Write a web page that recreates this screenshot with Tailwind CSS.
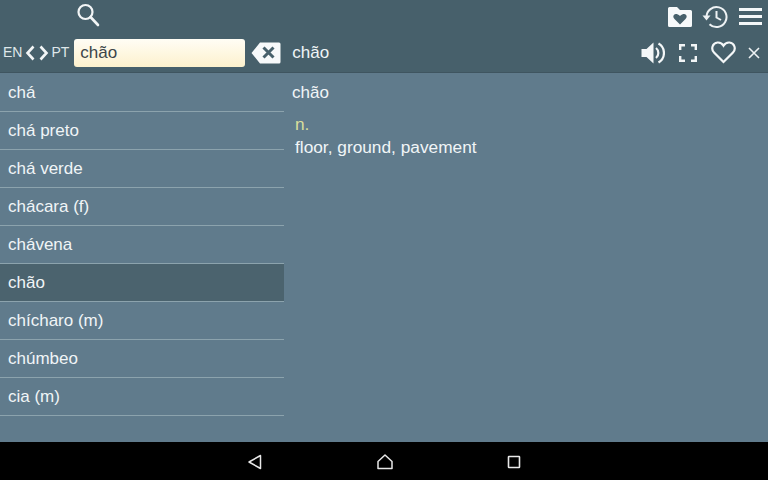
<!DOCTYPE html>
<html lang="pt">
<head>
    <meta charset="UTF-8">
    <meta name="viewport" content="width=device-width, initial-scale=1.0">
    <title>Dictionary</title>
    <script src="https://cdn.jsdelivr.net/npm/@tailwindcss/browser@4"></script>
</head>
<body class="w-[768px] h-[480px] overflow-hidden flex flex-col bg-[#607b8c] font-['Liberation_Sans',Arial,sans-serif] text-[#f0f5f7]">
    <!-- top bar -->
    <header class="h-[73px] shrink-0 bg-[#47606b] border-b border-[#3f5560] flex flex-col">
        <div class="h-[33px] flex items-center">
            <svg class="ml-[76px] mb-[3px]" width="24" height="24" viewBox="0 0 24 24" fill="none" stroke="#f2f5f6" stroke-width="2.2" stroke-linecap="round">
                <circle cx="9.5" cy="9" r="7"/>
                <path d="M14.500 14l7.500 8" stroke-width="2.600"/>
            </svg>
            <div class="ml-auto flex items-center">
                <svg width="26" height="22" viewBox="0 0 26 22">
                    <path fill="#f7f9fa" fill-rule="evenodd" d="M2.500 1H10l3 3h10.500a1.500 1.500 0 0 1 1.500 1.500V19.500a1.500 1.500 0 0 1-1.500 1.500H2.500A1.500 1.500 0 0 1 1 19.500V2.500A1.500 1.500 0 0 1 2.500 1zM13 18.500l5.500-5.500c1.600-1.700 1.300-3.300.6-4.100-1.100-1.200-3.300-1.400-6.100 1-2.800-2.400-5-2.200-6.100-1-.7.800-1 2.400.6 4.100z"/>
                </svg>
                <svg class="ml-[9px]" width="26" height="24" viewBox="0 0 26 24" fill="none" stroke="#eef2f4" stroke-width="2">
                    <path d="M4.500 12a10 10 0 1 1 3 7.200"/>
                    <path d="M0.500 10.500h8l-4 5z" fill="#eef2f4" stroke="none"/>
                    <path d="M14.500 6v6.500l4.500 2.500"/>
                </svg>
                <div class="ml-[11px] mr-[6px] w-[23px] flex flex-col gap-[4px]">
                    <div class="h-[3px] bg-[#f4f7f8]"></div>
                    <div class="h-[3px] bg-[#f4f7f8]"></div>
                    <div class="h-[3px] bg-[#f4f7f8]"></div>
                </div>
            </div>
        </div>
        <div class="flex-1 flex items-center">
            <span class="ml-[3px] text-[14px] text-[#dfe7ea]">EN</span>
            <svg class="ml-[3px]" width="10" height="16" viewBox="0 0 10 16" fill="none" stroke="#f2f5f6" stroke-width="2.600"><path d="M8.500 1.500L2.500 8l6 6.500"/></svg>
            <svg class="ml-[4px]" width="10" height="16" viewBox="0 0 10 16" fill="none" stroke="#f2f5f6" stroke-width="2.600"><path d="M1.500 1.500L7.500 8l-6 6.500"/></svg>
            <span class="ml-[2px] text-[14px] text-[#dfe7ea]">PT</span>
            <div class="ml-[5px] w-[171px] h-[28px] rounded-[3px] bg-gradient-to-b from-[#fffdf5] to-[#fdf1cd] flex items-center pl-[6px] text-[17px] text-[#3c4549]">chão</div>
            <svg class="ml-[6px]" width="30" height="22" viewBox="0 0 30 22">
                <path fill="#f7f9fa" d="M9 0.500h19a1.500 1.500 0 0 1 1.500 1.500v18a1.500 1.500 0 0 1-1.500 1.500H9L0.500 11z"/>
                <path d="M12.500 5.500l10 10m0-10l-10 10" stroke="#47606b" stroke-width="3"/>
            </svg>
            <span class="ml-[11px] text-[17px]">chão</span>
            <div class="ml-auto flex items-center">
                <svg width="24" height="24" viewBox="0 0 24 24">
                    <path fill="#f4f7f8" d="M0.500 8h5L12.500 1.500v21L5.500 16h-5z"/>
                    <path d="M15 7a6.500 6.500 0 0 1 0 10M17.500 2.500a11 11 0 0 1 0 19" fill="none" stroke="#f4f7f8" stroke-width="2.200"/>
                </svg>
                <svg class="ml-[14px]" width="18" height="18" viewBox="0 0 18 18" fill="none" stroke="#f2f5f6" stroke-width="2.400">
                    <path d="M1.200 6V1.200H6M12 1.200h4.800V6M16.800 12v4.800H12M6 16.800H1.200V12"/>
                </svg>
                <svg class="ml-[14px]" width="25" height="23" viewBox="0 0 25 23" fill="none" stroke="#f4f7f8" stroke-width="2.200">
                    <path d="M12.500 21L3 11.500C-.2 8.200 1.200 2 6.500 1.500c2.700-.2 4.700 1 6 3.200 1.300-2.200 3.300-3.400 6-3.200 5.300.5 6.700 6.700 3.500 10z"/>
                </svg>
                <svg class="ml-[12px] mr-[8px]" width="12" height="12" viewBox="0 0 12 12" stroke="#eef2f4" stroke-width="1.600"><path d="M1 1l10 10M11 1L1 11"/></svg>
            </div>
        </div>
    </header>

    <!-- list + detail -->
    <main class="flex-1 flex min-h-0 pt-[1px]">
        <ul class="w-[284px] shrink-0 text-[17px]">
            <li class="h-[38px] pl-[8px] flex items-center border-b border-[#8ca3ad]">chá</li>
            <li class="h-[38px] pl-[8px] flex items-center border-b border-[#8ca3ad]">chá preto</li>
            <li class="h-[38px] pl-[8px] flex items-center border-b border-[#8ca3ad]">chá verde</li>
            <li class="h-[38px] pl-[8px] flex items-center border-b border-[#8ca3ad]">chácara (f)</li>
            <li class="h-[38px] pl-[8px] flex items-center border-b border-[#8ca3ad]">chávena</li>
            <li class="h-[38px] pl-[8px] flex items-center bg-[#4b636e] border-b border-[#8ca3ad]">chão</li>
            <li class="h-[38px] pl-[8px] flex items-center border-b border-[#8ca3ad]">chícharo (m)</li>
            <li class="h-[38px] pl-[8px] flex items-center border-b border-[#8ca3ad]">chúmbeo</li>
            <li class="h-[38px] pl-[8px] flex items-center border-b border-[#8ca3ad]">cia (m)</li>
        </ul>
        <section class="flex-1 pl-[8px]">
            <div class="h-[37px] flex items-center text-[17px]">chão</div>
            <div class="pl-[3px] mt-[2px] text-[17.3px] leading-[23px]">
                <div class="text-[#d9df9c]">n.</div>
                <div>floor, ground, pavement</div>
            </div>
        </section>
    </main>

    <!-- android nav -->
    <nav class="h-[38px] shrink-0 bg-black flex items-center justify-center gap-[113px] pt-[2px] pr-[1px]">
        <svg width="16" height="16" viewBox="0 0 16 16" fill="none" stroke="#e8e8e8" stroke-width="1.500" stroke-linejoin="round"><path d="M13.500 1.500v13L2 8z"/></svg>
        <svg width="18" height="16" viewBox="0 0 18 16" fill="none" stroke="#e8e8e8" stroke-width="1.500" stroke-linejoin="round"><path d="M9 1L2 7.500v7h14v-7z"/></svg>
        <svg width="14" height="14" viewBox="0 0 14 14" fill="none" stroke="#e8e8e8" stroke-width="1.600"><rect x="1.500" y="1.500" width="11" height="11" rx="0.500"/></svg>
    </nav>
</body>
</html>
